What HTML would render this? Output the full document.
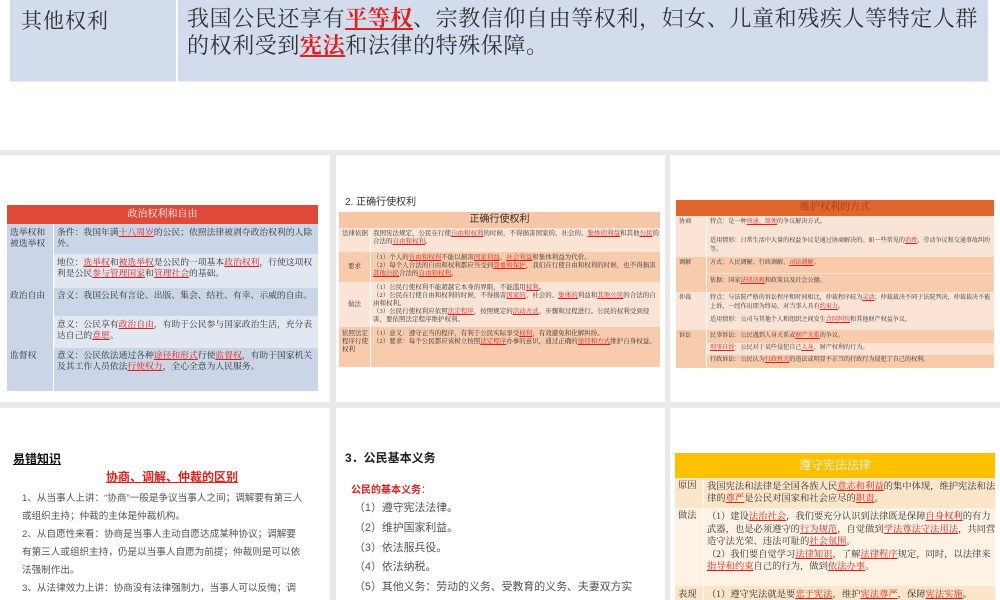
<!DOCTYPE html>
<html><head><meta charset="utf-8"><style>
*{margin:0;padding:0;box-sizing:border-box}
body{width:1000px;height:600px;overflow:hidden;background:#e9e9e9;font-family:"Liberation Serif","Noto Serif CJK SC",serif;position:relative}
.s{position:absolute;background:#fff;overflow:hidden}
.a{position:absolute}
.r{color:#e0201c;text-decoration:underline}
.sm{font-size:8.8px;line-height:11px;color:#333}
.xs{font-size:6.5px;line-height:8px;color:#333}
.x3{font-size:6.1px;line-height:8.5px;color:#333}
.sans{font-family:"Liberation Sans","Noto Sans CJK SC",sans-serif}
</style></head><body>

<div class="s" style="left:0;top:0;width:1000px;height:150px">
 <div class="a" style="left:10px;top:0;width:978px;height:82px;background:#d2dcec;border-bottom:1px solid #e6ecf4"></div>
 <div class="a" style="left:176px;top:0;width:2px;height:82px;background:#fff"></div>
 <div class="a" style="left:21px;top:5px;font-size:21px;letter-spacing:1px;color:#333">其他权利</div>
 <div class="a" style="left:187px;top:5px;width:795px;font-size:22px;letter-spacing:0.6px;line-height:27px;color:#333">我国公民还享有<b class="r">平等权</b>、宗教信仰自由等权利，妇女、儿童和残疾人等特定人群的权利受到<b class="r">宪法</b>和法律的特殊保障。</div>
</div>

<!-- row 2 slide 1 -->
<div class="s" style="left:0;top:155px;width:330px;height:247px">
 <div class="a" style="left:7px;top:50px;width:311px;height:19px;background:#e04a3a;color:#fff;font-size:10px;text-align:center;line-height:19px">政治权利和自由</div>
 <div class="a" style="left:7px;top:69px;width:311px;height:30px;background:#cad6e8"></div>
 <div class="a" style="left:7px;top:99px;width:311px;height:34px;background:#e2e8f2"></div>
 <div class="a" style="left:7px;top:133px;width:311px;height:28px;background:#cad6e8"></div>
 <div class="a" style="left:7px;top:161px;width:311px;height:32px;background:#e2e8f2"></div>
 <div class="a" style="left:7px;top:193px;width:311px;height:43px;background:#cad6e8"></div>
 <div class="a" style="left:7px;top:99px;width:46px;height:34px;background:#cad6e8"></div>
 <div class="a" style="left:7px;top:161px;width:46px;height:32px;background:#cad6e8"></div>
 <div class="a" style="left:53px;top:69px;width:1px;height:167px;background:#fff"></div>
 <div class="a sm" style="left:10px;top:72px;width:42px">选举权和被选举权</div>
 <div class="a sm" style="left:10px;top:135px">政治自由</div>
 <div class="a sm" style="left:10px;top:195px">监督权</div>
 <div class="a sm" style="left:57px;top:72px;width:260px">条件：我国年满<span class="r">十八周岁</span>的公民；依照法律被剥夺政治权利的人除外。</div>
 <div class="a sm" style="left:57px;top:102px;width:260px">地位：<span class="r">选举权</span>和<span class="r">被选举权</span>是公民的一项基本<span class="r">政治权利</span>，行使这项权利是公民<span class="r">参与管理国家</span>和<span class="r">管理社会</span>的基础。</div>
 <div class="a sm" style="left:57px;top:135px;width:270px;white-space:nowrap">含义：我国公民有言论、出版、集会、结社、有幸、示威的自由。</div>
 <div class="a sm" style="left:57px;top:164px;width:260px">意义：公民享有<span class="r">政治自由</span>，有助于公民参与国家政治生活，充分表达自己的<span class="r">意愿</span>。</div>
 <div class="a sm" style="left:57px;top:195px;width:260px">意义：公民依法通过各种<span class="r">途径和形式</span>行使<span class="r">监督权</span>，有助于国家机关及其工作人员依法<span class="r">行使权力</span>，全心全意为人民服务。</div>
</div>

<!-- row 2 slide 2 -->
<div class="s" style="left:336px;top:155px;width:329px;height:247px">
 <div class="a sans" style="left:9px;top:38px;font-size:10px;color:#333">2. 正确行使权利</div>
 <div class="a sans" style="left:3px;top:57px;width:321px;height:16px;background:#f7c6a6;font-size:10px;text-align:center;line-height:16px;color:#333">正确行使权利</div>
 <div class="a" style="left:3px;top:73px;width:321px;height:24px;background:#fbe3d6"></div>
 <div class="a" style="left:3px;top:97px;width:321px;height:30px;background:#f8cbad"></div>
 <div class="a" style="left:3px;top:127px;width:321px;height:45px;background:#fbe3d6"></div>
 <div class="a" style="left:3px;top:172px;width:321px;height:40px;background:#f8cbad"></div>
 <div class="a" style="left:34px;top:73px;width:1px;height:139px;background:#fff"></div>
 <div class="a xs" style="left:6px;top:75px;width:26px">法律依据</div>
 <div class="a xs" style="left:12px;top:108px">要求</div>
 <div class="a xs" style="left:12px;top:146px">做法</div>
 <div class="a xs" style="left:6px;top:175px;width:26px">依照法定程序行使权利</div>
 <div class="a xs" style="left:37px;top:75px;width:286px">我国宪法规定，公民在行使<span class="r">自由和权利</span>的时候，不得损害国家的、社会的、<span class="r">集体的利益</span>和其他<span class="r">公民</span>的合法的<span class="r">自由和权利</span>。</div>
 <div class="a xs" style="left:37px;top:99px;width:286px">（1）个人的<span class="r">自由和权利</span>不能以损害<span class="r">国家利益</span>、<span class="r">社会利益</span>和集体利益为代价。<br>（2）每个人合法的自由和权利都应当受到<span class="r">尊重和保护</span>，我们在行使自由和权利的时候，也不得损害<span class="r">其他公民</span>合法的<span class="r">自由和权利</span>。</div>
 <div class="a xs" style="left:37px;top:129px;width:286px">（1）公民行使权利不能超越它本身的界限，不能滥用<span class="r">权利</span>。<br>（2）公民在行使自由和权利的时候，不得损害<span class="r">国家的</span>、社会的、<span class="r">集体的</span>利益和<span class="r">其他公民</span>的合法的自由和权利。<br>（3）公民行使权利应依照<span class="r">法定程序</span>，按照规定的<span class="r">活动方式</span>、步骤和过程进行。公民的权利受到侵害，要依照法定程序维护权利。</div>
 <div class="a xs" style="left:37px;top:175px;width:286px">（1）意义：遵守正当的程序，有利于公民实际享受<span class="r">权利</span>，有效避免和化解纠纷。<br>（2）要求：每个公民都应该树立按照<span class="r">法定程序</span>办事的意识，通过正确的<span class="r">途径和方式</span>维护自身权益。</div>
</div>

<!-- row 2 slide 3 -->
<div class="s" style="left:670px;top:155px;width:330px;height:247px">
 <div class="a" style="left:6px;top:45px;width:318px;height:16px;background:#e0662e;font-size:10px;text-align:center;line-height:16px;color:#a33a10">维护权利的方式</div>
 <div class="a" style="left:6px;top:61px;width:318px;height:41px;background:#fbe3d6"></div>
 <div class="a" style="left:6px;top:102px;width:318px;height:35px;background:#f8cbad"></div>
 <div class="a" style="left:6px;top:137px;width:318px;height:38px;background:#fbe3d6"></div>
 <div class="a" style="left:6px;top:175px;width:318px;height:38px;background:#f8cbad"></div>
 <div class="a" style="left:36px;top:118px;width:288px;height:1px;background:#fbe3d6"></div>
 <div class="a" style="left:36px;top:188px;width:288px;height:12px;background:#fbe3d6"></div>
 <div class="a" style="left:36px;top:61px;width:1px;height:152px;background:#fff"></div>
 <div class="a x3" style="left:9px;top:63px">协商</div>
 <div class="a x3" style="left:9px;top:104px">调解</div>
 <div class="a x3" style="left:9px;top:139px">仲裁</div>
 <div class="a x3" style="left:9px;top:177px">诉讼</div>
 <div class="a x3" style="left:40px;top:63px;width:284px">特点：是一种<span class="r">快速、简便</span>的争议解决方式。</div>
 <div class="a x3" style="left:40px;top:82px;width:284px">适用情形：日常生活中大量的权益争议是通过协商解决的。如一些常见的<span class="r">消费</span>、劳动争议和交通事故纠纷等。</div>
 <div class="a x3" style="left:40px;top:104px;width:284px">方式：人民调解、行政调解、<span class="r">司法调解</span>。</div>
 <div class="a x3" style="left:40px;top:122px;width:284px">依据：国家<span class="r">法律法规</span>和政策以及社会公德。</div>
 <div class="a x3" style="left:40px;top:139px;width:286px">特点：与法院严格的诉讼程序和时间相比，仲裁程序较为<span class="r">灵活</span>；仲裁裁决不同于法院判决，仲裁裁决不能上诉，一经作出即为终局，对当事人具有<span class="r">约束力</span>。</div>
 <div class="a x3" style="left:40px;top:161px;width:284px">适用情形：公司与其他个人和组织之间发生<span class="r">合同纠纷</span>和其他财产权益争议。</div>
 <div class="a x3" style="left:40px;top:177px;width:284px">民事诉讼：公民遇到人身关系或<span class="r">财产关系</span>的争议。</div>
 <div class="a x3" style="left:40px;top:189px;width:284px"><span class="r">刑事自诉</span>：公民对于某些侵犯自己<span class="r">人身</span>、财产权利的行为。</div>
 <div class="a x3" style="left:40px;top:201px;width:284px">行政诉讼：公民认为<span class="r">行政机关</span>的违法或明显不正当的行政行为侵犯了自己的权利。</div>
</div>

<!-- row 3 slide 1 -->
<div class="s sans" style="left:0;top:408px;width:330px;height:192px">
 <div class="a" style="left:13px;top:42px;font-size:12px;font-weight:bold;text-decoration:underline;color:#111">易错知识</div>
 <div class="a" style="left:0;top:60px;width:344px;text-align:center;font-size:12px;font-weight:bold;color:#e0201c;text-decoration:underline">协商、调解、仲裁的区别</div>
 <div class="a" style="left:22px;top:82px;width:282px;font-size:9.6px;line-height:18px;color:#555">1、从当事人上讲：“协商”一般是争议当事人之间；调解要有第三人或组织主持；仲裁的主体是仲裁机构。<br>2、从自愿性来看：协商是当事人主动自愿达成某种协议；调解要有第三人或组织主持，仍是以当事人自愿为前提；仲裁则是可以依法强制作出。<br>3、从法律效力上讲：协商没有法律强制力，当事人可以反悔；调解经司法确认，有法律强制力，可以凭此申请强制执行，普通的调解协</div>
</div>

<!-- row 3 slide 2 -->
<div class="s sans" style="left:336px;top:408px;width:329px;height:192px">
 <div class="a" style="left:9px;top:41px;font-size:12px;font-weight:bold;color:#222">3．公民基本义务</div>
 <div class="a" style="left:15px;top:73px;font-size:10px;font-weight:bold;color:#e0201c">公民的基本义务<span style="color:#555;font-weight:normal">：</span></div>
 <div class="a" style="left:18px;top:91px;font-size:10.9px;line-height:19.8px;color:#555;white-space:nowrap">（1）遵守宪法法律。<br>（2）维护国家利益。<br>（3）依法服兵役。<br>（4）依法纳税。<br>（5）其他义务：劳动的义务、受教育的义务、夫妻双方实</div>
</div>

<!-- row 3 slide 3 -->
<div class="s" style="left:670px;top:408px;width:330px;height:192px">
 <div class="a" style="left:5px;top:45px;width:320px;height:25px;background:#ffc000;color:#fff;font-size:12px;text-align:center;line-height:25px">遵守宪法法律</div>
 <div class="a" style="left:5px;top:70px;width:320px;height:30px;background:#fde5c9"></div>
 <div class="a" style="left:5px;top:100px;width:320px;height:78px;background:#fef2e4"></div>
 <div class="a" style="left:5px;top:178px;width:320px;height:14px;background:#fde5c9"></div>
 <div class="a" style="left:33px;top:70px;width:1px;height:122px;background:#fff"></div>
 <div class="a sm" style="left:8px;top:73px;font-size:9.3px">原因</div>
 <div class="a sm" style="left:8px;top:103px;font-size:9.3px">做法</div>
 <div class="a sm" style="left:8px;top:182px;font-size:9.3px">表现</div>
 <div class="a sm" style="left:37px;top:73px;width:290px;line-height:12px;font-size:9.3px">我国宪法和法律是全国各族人民<span class="r">意志和利益</span>的集中体现，维护宪法和法律的<span class="r">尊严</span>是公民对国家和社会应尽的<span class="r">职责</span>。</div>
 <div class="a sm" style="left:37px;top:103px;width:290px;line-height:12.5px;font-size:9.3px">（1）建设<span class="r">法治社会</span>，我们要充分认识到法律既是保障<span class="r">自身权利</span>的有力武器，也是必须遵守的<span class="r">行为规范</span>，自觉做到<span class="r">学法尊法守法用法</span>，共同营造守法光荣、违法可耻的<span class="r">社会氛围</span>。<br>（2）我们要自觉学习<span class="r">法律知识</span>，了解<span class="r">法律程序</span>规定，同时，以法律来<span class="r">指导和约束</span>自己的行为，做到<span class="r">依法办事</span>。</div>
 <div class="a sm" style="left:37px;top:182px;width:290px;font-size:9.3px">（1）遵守宪法就是要<span class="r">忠于宪法</span>，维护<span class="r">宪法尊严</span>，保障<span class="r">宪法实施</span>。</div>
</div>
</body></html>
